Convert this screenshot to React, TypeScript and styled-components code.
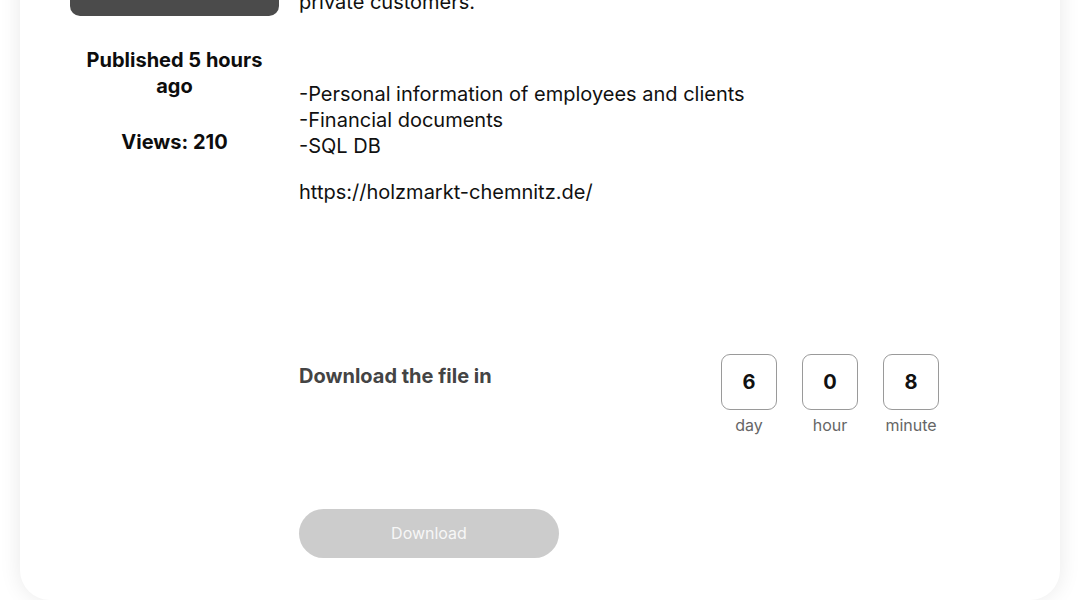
import styled, { createGlobalStyle } from 'styled-components';

const GlobalStyle = createGlobalStyle`
  * { box-sizing: border-box; }
  body {
    margin: 0;
    background: #ffffff;
    font-family: "Inter", "Liberation Sans", sans-serif;
    color: #111;
    overflow: hidden;
  }
`;

const countdown = [
  { value: 6, label: 'day' },
  { value: 0, label: 'hour' },
  { value: 8, label: 'minute' },
];

export default function App() {
  return (
    <>
      <GlobalStyle />
      <Page>
        <Card>
          <Sidebar>
            <Cover />
            <Meta>Published 5 hours ago</Meta>
            <Meta>Views: 210</Meta>
          </Sidebar>
          <Main>
            <Text>
              Holzmarkt Chemnitz is a timber and building materials trading company.
              <br />
              The company sells wood, boards, panels and garden products, and offers
              <br />
              cutting, delivery and consulting services for both business and
              <br />
              private customers.
            </Text>
            <Text>
              <br />
            </Text>
            <Text>
              -Personal information of employees and clients
              <br />
              -Financial documents
              <br />
              -SQL DB
            </Text>
            <Text>https://holzmarkt-chemnitz.de/</Text>

            <DownloadRow>
              <DownloadTitle>Download the file in</DownloadTitle>
              <Timer>
                {countdown.map((c) => (
                  <TimerItem key={c.label}>
                    <TimerBox>{c.value}</TimerBox>
                    <TimerLabel>{c.label}</TimerLabel>
                  </TimerItem>
                ))}
              </Timer>
            </DownloadRow>

            <DownloadButton disabled>Download</DownloadButton>
          </Main>
        </Card>
      </Page>
    </>
  );
}

const Page = styled.div`
  padding: 0 20px;
`;

const Card = styled.div`
  margin-top: -139px;
  padding: 50px 50px 42px;
  display: flex;
  gap: 20px;
  background: #fff;
  border-radius: 30px;
  box-shadow: 0 0 22px rgba(0, 0, 0, 0.09);
`;

const Sidebar = styled.aside`
  width: 209px;
  flex-shrink: 0;
  display: flex;
  flex-direction: column;
  align-items: center;
`;

const Cover = styled.div`
  width: 100%;
  height: 105px;
  background: #4b4b4b;
  border-radius: 10px;
  margin-bottom: 31px;
`;

const Meta = styled.p`
  margin: 0 0 30px;
  font-size: 20px;
  line-height: 26px;
  font-weight: 700;
  text-align: center;
  color: #0d0d0d;
  padding: 0 10px;
`;

const Main = styled.main`
  flex: 1;
  min-width: 0;
`;

const Text = styled.p`
  margin: 0 0 20px;
  font-size: 20px;
  line-height: 26px;
  color: #111;
  white-space: nowrap;
`;

const DownloadRow = styled.div`
  margin-top: 149px;
  width: 640px;
  display: flex;
  justify-content: space-between;
  align-items: flex-start;
`;

const DownloadTitle = styled.h3`
  margin: 0;
  padding-top: 9px;
  font-size: 20px;
  line-height: 26px;
  font-weight: 700;
  color: #444;
`;

const Timer = styled.div`
  display: flex;
  gap: 25px;
`;

const TimerItem = styled.div`
  width: 56px;
  display: flex;
  flex-direction: column;
  align-items: center;
  gap: 5px;
`;

const TimerBox = styled.div`
  width: 56px;
  height: 56px;
  border: 1px solid #9a9a9a;
  border-radius: 9px;
  display: flex;
  align-items: center;
  justify-content: center;
  font-size: 20px;
  font-weight: 700;
  color: #111;
`;

const TimerLabel = styled.span`
  font-size: 16px;
  line-height: 20px;
  color: #666;
`;

const DownloadButton = styled.button`
  margin-top: 74px;
  width: 260px;
  height: 49px;
  padding: 0 0 2px;
  border: none;
  border-radius: 25px;
  background: #cccccc;
  color: #f7f7f7;
  font-family: "Inter", "Liberation Sans", sans-serif;
  font-size: 16px;
  cursor: default;
`;
